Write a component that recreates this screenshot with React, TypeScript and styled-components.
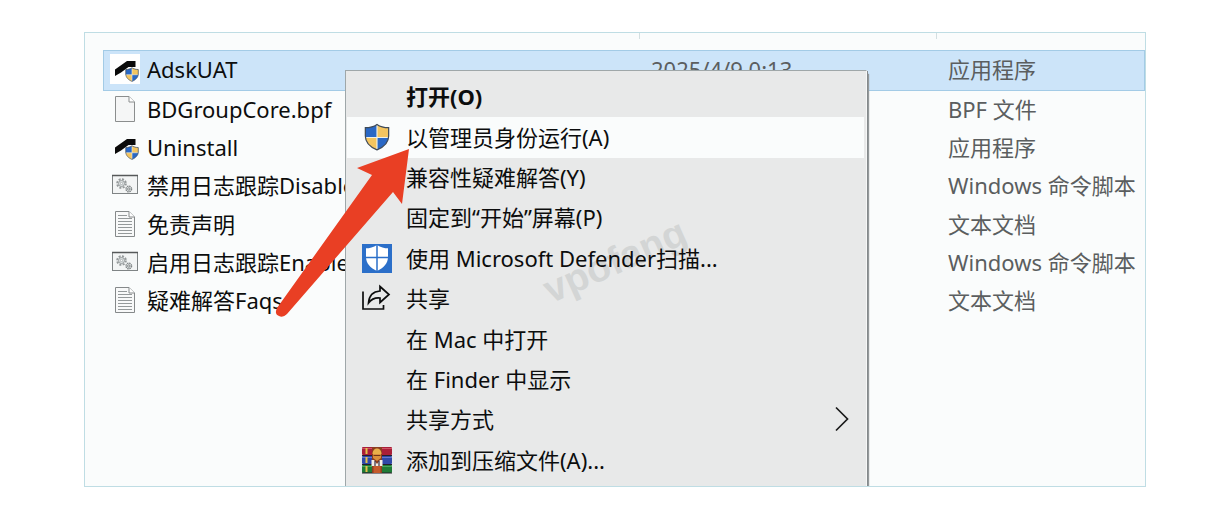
import React from 'react';
import styled, { createGlobalStyle, css } from 'styled-components';

const GlobalStyle = createGlobalStyle`
  *, *::before, *::after { box-sizing: border-box; }
  body {
    margin: 0;
    background: #ffffff;
    font-family: "Noto Sans", "Noto Sans CJK SC", sans-serif;
    font-size: 22px;
    line-height: 30px;
    color: #0c0d0d;
  }
`;

const Page = styled.main`
  padding: 32px 83px 32px 84px;
`;

const Explorer = styled.section`
  position: relative;
  display: grid;
  border: 1px solid #bfdde4;
  background: #fafcfc;
  overflow: hidden;
`;

const FilePane = styled.div`
  grid-area: 1 / 1;
  min-width: 0;
  padding-left: 18px;
`;

const ColumnStrip = styled.div`
  display: grid;
  grid-template-columns: 537px 297px 1fr;
  height: 6px;
  margin-bottom: 11px;
`;

const ColumnMark = styled.span`
  border-right: 1px solid #d3dfe1;
  &:last-child { border-right: 0; }
`;

const FileTable = styled.table`
  table-layout: fixed;
  width: 100%;
  height: 271px;
  border-collapse: collapse;
  border-spacing: 0;
`;

const NameCol = styled.col`width: 536px;`;
const DateCol = styled.col`width: 297px;`;

const FileRow = styled.tr<{ $selected?: boolean }>`
  ${(p) =>
    p.$selected &&
    css`
      height: 41px;
      background: #cce4f9;
      box-shadow: inset 0 0 0 1px #a3cbe6;
    `}
`;

const Cell = styled.td`
  padding: 0 0 3px 12px;
  color: #5b5e5f;
  white-space: nowrap;
`;

const NameCell = styled(Cell)`
  padding-left: 7px;
  color: #0c0d0d;
`;

const FileName = styled.div`
  display: flex;
  align-items: center;
  gap: 7px;
`;

const FileIcon = styled.span<{ $plate?: boolean }>`
  display: flex;
  flex: none;
  align-items: center;
  justify-content: center;
  width: 30px;
  height: 30px;
  background: ${(p) => (p.$plate ? '#ffffff' : 'transparent')};
`;

const Menu = styled.div`
  position: relative;
  grid-area: 1 / 1;
  justify-self: start;
  width: 522px;
  margin: 37px 0 0 260px;
  padding: 6px 2px 5px 1px;
  border: 1px solid #9fa7a9;
  border-right-color: #f6f7f7;
  border-bottom: 0;
  background: #e8e9e9;
  box-shadow: 1px 1px 0 #858a8c, 2px 4px 1px #94999b;
`;

const Items = styled.div`
  position: relative;
  display: grid;
  grid-auto-rows: 1fr;
  height: 404px;
`;

const Item = styled.button<{ $active?: boolean; $strong?: boolean }>`
  display: flex;
  align-items: center;
  gap: 14px;
  padding: 0 14px 2px 15px;
  border: 0;
  background: ${(p) => (p.$active ? '#fafcfc' : 'transparent')};
  font: inherit;
  font-weight: ${(p) => (p.$strong ? 700 : 400)};
  color: inherit;
  text-align: left;
  white-space: nowrap;
`;

const ItemIcon = styled.span`
  display: flex;
  flex: none;
  align-items: center;
  justify-content: center;
  width: 30px;
`;

const ItemLabel = styled.span`
  flex: 1;
`;

const Watermark = styled.span`
  position: absolute;
  left: 193px;
  top: 168px;
  transform: rotate(-24deg);
  font-family: "Liberation Sans", sans-serif;
  font-size: 39px;
  font-weight: 700;
  line-height: 44px;
  color: #d3d5d5;
`;

const Pointer = styled.svg`
  position: absolute;
  left: 185px;
  top: 109px;
`;

const Shield = ({ width, height }: { width: number; height: number }) => (
  <svg width={width} height={height} viewBox="0 0 28 30" aria-hidden="true">
    <path d="M14 1.500C10.500 4 6 5 1.500 5V14C1.500 21 7 26 14 28.800Z" fill="#f4c560" />
    <path d="M14 1.500C17.500 4 22 5 26.500 5V14C26.500 21 21 26 14 28.800Z" fill="#2a68c5" />
    <path d="M14 1.500C10.500 4 6 5 1.500 5V14V15.500H14Z" fill="#2a68c5" />
    <path d="M14 1.500C17.500 4 22 5 26.500 5V14V15.500H14Z" fill="#f4c560" />
    <path d="M14 2V28M1.500 15.500H26.500" stroke="#f2f2e8" strokeWidth="1.200" />
    <path
      d="M14 1.500C10.500 4 6 5 1.500 5V14C1.500 21 7 26 14 28.800C21 26 26.500 21 26.500 14V5C22 5 17.500 4 14 1.500Z"
      fill="none"
      stroke="#3f4a58"
      strokeWidth="1.300"
    />
  </svg>
);

const AppIcon = () => (
  <svg width="30" height="30" viewBox="0 0 30 30" aria-hidden="true">
    <path d="M5 15.500L17 7H25.500V13H18.500L11 18.500L5 22Z" fill="#0a0a0a" />
    <g transform="translate(15 13)">
      <Shield width={14} height={15} />
    </g>
  </svg>
);

const BlankIcon = () => (
  <svg width="30" height="30" viewBox="0 0 30 30" aria-hidden="true">
    <path d="M5.500 2.500H19L24.500 8V27.500H5.500Z" fill="#f5f6f6" stroke="#8b8e8e" />
    <path d="M19 2.500V8H24.500" fill="#ffffff" stroke="#8b8e8e" />
  </svg>
);

const TextIcon = () => (
  <svg width="30" height="30" viewBox="0 0 30 30" aria-hidden="true">
    <path d="M5.500 2.500H19L24.500 8V27.500H5.500Z" fill="#f8f9f9" stroke="#85898a" />
    <path d="M19 2.500V8H24.500" fill="#ffffff" stroke="#85898a" />
    <path
      d="M8 6.500H17M8 9.500H22M8 12.500H22M8 15.500H22M8 18.500H22M8 21.500H22M8 24.500H22"
      stroke="#94999a"
    />
  </svg>
);

const ScriptIcon = () => (
  <svg width="30" height="30" viewBox="0 0 30 30" aria-hidden="true">
    <rect x="2.500" y="5.500" width="25" height="18" fill="#f3f5f5" stroke="#7f8485" />
    <path d="M2 5.500H28" stroke="#56595a" strokeWidth="1.500" />
    <circle cx="11.500" cy="13.500" r="4.300" fill="none" stroke="#94999a" strokeWidth="2" strokeDasharray="2 1.370" />
    <circle cx="11.500" cy="13.500" r="3" fill="#e3e7e8" stroke="#94999a" />
    <circle cx="11.500" cy="13.500" r="1.200" fill="#fafcfc" stroke="#94999a" strokeWidth=".7" />
    <circle cx="18.800" cy="19" r="2.800" fill="#e3e7e8" stroke="#7f8485" strokeWidth="1.300" strokeDasharray="1.500 .7" />
    <circle cx="18.800" cy="19" r="1.200" fill="#fafcfc" stroke="#7f8485" />
  </svg>
);

const DefenderIcon = () => (
  <svg width="30" height="30" viewBox="0 0 30 30" aria-hidden="true">
    <rect width="30" height="29" y="1" fill="#2b6fc9" />
    <path d="M15 2C11.500 4.500 7.500 5.300 4 5.300V14C4 20.500 8.500 25 15 28C21.500 25 26 20.500 26 14V5.300C22.500 5.300 18.500 4.500 15 2Z" fill="#ffffff" />
    <path d="M15 2V28M4 14.500H26" stroke="#2b6fc9" strokeWidth="1.500" />
  </svg>
);

const ShareIcon = () => (
  <svg width="30" height="28" viewBox="0 0 30 28" fill="none" stroke="#0c0d0d" strokeWidth="1.700" aria-hidden="true">
    <path d="M1 7.500V25H21.500V21" />
    <path d="M18 2.500L27 10.500L18 18.500V14C13 13.500 9.500 15 6.500 19C7 12 11 7.500 18 7Z" />
  </svg>
);

const ArchiveIcon = () => (
  <svg width="30" height="28" viewBox="0 0 30 28" aria-hidden="true">
    <rect x="0" y="1" width="30" height="8" rx="1" fill="#a91f38" />
    <rect x="0" y="10" width="30" height="8" rx="1" fill="#3048a8" />
    <rect x="0" y="19" width="30" height="8" rx="1" fill="#1f7b36" />
    <path d="M0 9.500H30M0 18.500H30M0 27H30" stroke="#241f2b" />
    <path d="M0 2.500H30" stroke="#cf5266" />
    <path d="M0 11.500H30" stroke="#6378cc" />
    <path d="M0 20.500H30" stroke="#4aa45b" />
    <path d="M4.500 2V8M4.500 11V17M4.500 20V26" stroke="#e5c04b" strokeWidth="2" />
    <rect x="10" y="1" width="10" height="26" fill="#8b3d20" />
    <path d="M10.500 8C10.500 0.500 19.500 0.500 19.500 8Z" fill="#e8b04a" />
    <path d="M11 8H19V12L15 15L11 12Z" fill="#d98f3c" />
    <path d="M11.500 9.500H18.500" stroke="#6d3516" />
    <path d="M9.500 14H12L15 18L18 14H20.500V20H9.500Z" fill="#f4eee4" />
    <path d="M13 15V20M17 15V20" stroke="#353044" strokeWidth="1.200" />
    <rect x="11.500" y="20" width="7" height="7" fill="#c45a2b" />
  </svg>
);

const Chevron = () => (
  <svg width="16" height="26" viewBox="0 0 16 26" fill="none" stroke="#1a1b1b" strokeWidth="1.700" aria-hidden="true">
    <path d="M2 1.500L13.500 13L2 24.500" />
  </svg>
);

interface FileEntry {
  name: string;
  icon: React.ReactNode;
  date?: string;
  type: string;
  selected?: boolean;
}

const files: FileEntry[] = [
  { name: 'AdskUAT', icon: <AppIcon />, date: '2025/4/9 0:13', type: '应用程序', selected: true },
  { name: 'BDGroupCore.bpf', icon: <BlankIcon />, type: 'BPF 文件' },
  { name: 'Uninstall', icon: <AppIcon />, type: '应用程序' },
  { name: '禁用日志跟踪Disable', icon: <ScriptIcon />, type: 'Windows 命令脚本' },
  { name: '免责声明', icon: <TextIcon />, type: '文本文档' },
  { name: '启用日志跟踪Enable', icon: <ScriptIcon />, type: 'Windows 命令脚本' },
  { name: '疑难解答Faqs', icon: <TextIcon />, type: '文本文档' },
];

interface MenuEntry {
  label: string;
  icon?: React.ReactNode;
  strong?: boolean;
  active?: boolean;
  submenu?: boolean;
}

const entries: MenuEntry[] = [
  { label: '打开(O)', strong: true },
  { label: '以管理员身份运行(A)', icon: <Shield width={28} height={28} />, active: true },
  { label: '兼容性疑难解答(Y)' },
  { label: '固定到“开始”屏幕(P)' },
  { label: '使用 Microsoft Defender扫描...', icon: <DefenderIcon /> },
  { label: '共享', icon: <ShareIcon /> },
  { label: '在 Mac 中打开' },
  { label: '在 Finder 中显示' },
  { label: '共享方式', submenu: true },
  { label: '添加到压缩文件(A)...', icon: <ArchiveIcon /> },
];

export default function App() {
  return (
    <Page lang="zh-CN">
      <GlobalStyle />
      <Explorer>
        <FilePane>
          <ColumnStrip>
            <ColumnMark />
            <ColumnMark />
            <ColumnMark />
          </ColumnStrip>
          <FileTable>
            <colgroup>
              <NameCol />
              <DateCol />
              <col />
            </colgroup>
            <tbody>
              {files.map((file) => (
                <FileRow key={file.name} $selected={file.selected}>
                  <NameCell>
                    <FileName>
                      <FileIcon $plate={file.selected}>{file.icon}</FileIcon>
                      {file.name}
                    </FileName>
                  </NameCell>
                  <Cell>{file.date}</Cell>
                  <Cell>{file.type}</Cell>
                </FileRow>
              ))}
            </tbody>
          </FileTable>
        </FilePane>
        <Menu role="menu">
          <Watermark>vpofang</Watermark>
          <Items>
            {entries.map((entry) => (
              <Item key={entry.label} type="button" role="menuitem" $active={entry.active} $strong={entry.strong}>
                <ItemIcon>{entry.icon}</ItemIcon>
                <ItemLabel>{entry.label}</ItemLabel>
                {entry.submenu && <Chevron />}
              </Item>
            ))}
          </Items>
        </Menu>
        <Pointer width="150" height="180" viewBox="0 0 150 180" aria-hidden="true">
          <path
            d="M139 7L87 26L102 33L7 166Q4 172 9 174Q13 176 17 172L123 50L132 62Z"
            fill="#e93f24"
          />
        </Pointer>
      </Explorer>
    </Page>
  );
}
